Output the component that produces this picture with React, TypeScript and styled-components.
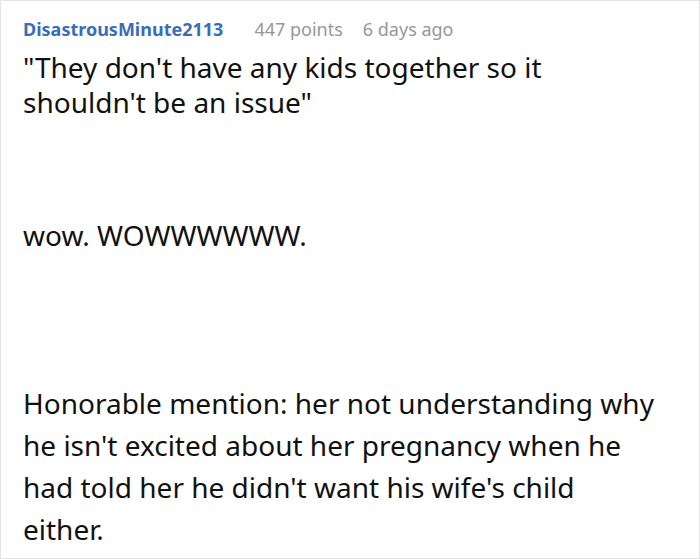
import styled, { createGlobalStyle } from 'styled-components'

const GlobalStyle = createGlobalStyle`
  html, body {
    margin: 0;
    padding: 0;
    background: #fff;
  }
  body {
    font-family: "Noto Sans", "Open Sans", sans-serif;
  }
`

const CommentCard = styled.div`
  box-sizing: border-box;
  width: 700px;
  height: 559px;
  border: 1px solid #e3e3e3;
  padding: 16px 40px 0 22px;
  overflow: hidden;
`

const MetaRow = styled.div`
  display: flex;
  align-items: baseline;
  font-size: 18px;
  line-height: 24px;
  white-space: nowrap;
`

const Author = styled.span`
  color: #3b6cb9;
  font-weight: 700;
  margin-right: 31px;
`

const MetaText = styled.span`
  color: #979797;
  margin-right: 20px;
`

const Paragraph = styled.p<{ $gap?: number; $lineHeight?: number }>`
  margin: ${p => p.$gap ?? 0}px 0 0 0;
  color: #111;
  font-size: 28px;
  line-height: ${p => p.$lineHeight ?? 35}px;
`

export default function App() {
  return (
    <>
      <GlobalStyle />
      <CommentCard>
        <MetaRow>
          <Author>DisastrousMinute2113</Author>
          <MetaText>447 points</MetaText>
          <MetaText>6 days ago</MetaText>
        </MetaRow>
        <Paragraph $gap={9}>
          "They don't have any kids together so it shouldn't be an issue"
        </Paragraph>
        <Paragraph $gap={98}>wow. WOWWWWWW.</Paragraph>
        <Paragraph $gap={129} $lineHeight={42}>
          Honorable mention: her not understanding why he isn't excited about her pregnancy when he
          had told her he didn't want his wife's child either.
        </Paragraph>
      </CommentCard>
    </>
  )
}
